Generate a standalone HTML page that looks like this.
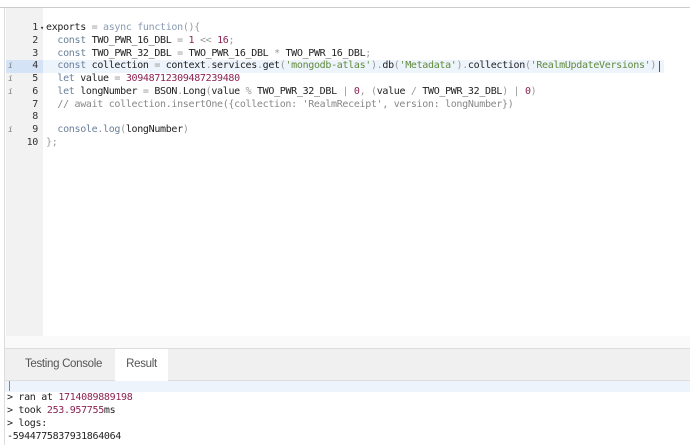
<html><head><style>
body{margin:0;width:690px;height:445px;background:#fff;font-family:"DejaVu Sans Mono","Liberation Mono",monospace;font-size:10px;letter-spacing:-0.32px;overflow:hidden;position:relative}
.top{position:absolute;left:0;top:7px;width:690px;height:1px;background:#ccc}
.gut{position:absolute;left:6px;top:8px;width:37px;height:328px;background:#f2f2f2}
.lbor{position:absolute;left:4px;top:8px;width:1px;height:437px;background:#ddd}
.hl{position:absolute;left:43px;top:60px;width:621px;height:13px;background:#eef4fc}
.hlg{position:absolute;left:6px;top:60px;width:37px;height:13px;background:#d5e3f7}
.code{position:absolute;left:0;top:22px;line-height:12.75px;color:#222}
.ln{position:absolute;left:18px;width:20px;text-align:right;color:#333}
.tx{position:absolute;left:46px;white-space:pre}
.i{position:absolute;left:8px;color:#777;font-style:italic;font-size:8px}
.k{color:#6a7f99}.n{color:#8b2252}.s{color:#5f8a3a}.c{color:#888}.p{color:#999}
.sep{position:absolute;left:5px;top:336px;width:685px;height:12px;background:#fafafa}
.tabs{position:absolute;left:5px;top:348px;width:685px;height:31px;background:#f0f0f0;border-top:1px solid #ddd;border-bottom:1px solid #ddd;font-family:"Liberation Sans",sans-serif;font-size:11.5px;color:#555}
.tab{position:absolute;top:0;height:31px;line-height:31px}
.res{left:110px;width:53px;background:#fff;text-align:center;height:32px}
.out{position:absolute;left:5px;top:381px;width:685px;height:11px;background:#eef4fc}
.cur{position:absolute;left:9px;top:381px;width:1px;height:10px;background:#888}
.o{position:absolute;left:7px;white-space:pre;color:#222;line-height:13px}
.cc{position:absolute;left:659px;top:61px;width:1px;height:11px;background:#555}
</style></head><body>
<div class="top"></div><div class="lbor"></div><div class="gut"></div>
<div class="hl"></div><div class="hlg"></div><div class="cc"></div>
<div class="code">
<div class="ln" style="top:0">1<span style="position:absolute;left:22px;font-size:7px">▾</span></div><div class="tx" style="top:0">exports <span class="p">=</span> <span class="k" style="color:#8a9bb3">async function</span><span class="p">(){</span></div>
<div class="ln" style="top:12.75px">2</div><div class="tx" style="top:12.75px">  <span class="k">const</span> TWO_PWR_16_DBL <span class="p">=</span> <span class="n">1</span> <span class="p">&lt;&lt;</span> <span class="n">16</span><span class="p">;</span></div>
<div class="ln" style="top:25.5px">3</div><div class="tx" style="top:25.5px">  <span class="k">const</span> TWO_PWR_32_DBL <span class="p">=</span> TWO_PWR_16_DBL <span class="p">*</span> TWO_PWR_16_DBL<span class="p">;</span></div>
<div class="i" style="top:38.25px">i</div><div class="ln" style="top:38.25px">4</div><div class="tx" style="top:38.25px">  <span class="k">const</span> collection <span class="p">=</span> context<span class="p">.</span>services<span class="p">.</span>get<span class="p">(</span><span class="s">'mongodb-atlas'</span><span class="p">).</span>db<span class="p">(</span><span class="s">'Metadata'</span><span class="p">).</span>collection<span class="p">(</span><span class="s">'RealmUpdateVersions'</span><span class="p">)</span></div>
<div class="i" style="top:51px">i</div><div class="ln" style="top:51px">5</div><div class="tx" style="top:51px">  <span class="k">let</span> value <span class="p">=</span> <span class="n">30948712309487239480</span></div>
<div class="i" style="top:63.75px">i</div><div class="ln" style="top:63.75px">6</div><div class="tx" style="top:63.75px">  <span class="k">let</span> longNumber <span class="p">=</span> BSON<span class="p">.</span>Long<span class="p">(</span>value <span class="p">%</span> TWO_PWR_32_DBL <span class="p">|</span> <span class="n">0</span><span class="p">,</span> <span class="p">(</span>value <span class="p">/</span> TWO_PWR_32_DBL<span class="p">)</span> <span class="p">|</span> <span class="n">0</span><span class="p">)</span></div>
<div class="ln" style="top:76.5px">7</div><div class="tx c" style="top:76.5px">  // await collection.insertOne({collection: 'RealmReceipt', version: longNumber})</div>
<div class="ln" style="top:89.25px">8</div>
<div class="i" style="top:102px">i</div><div class="ln" style="top:102px">9</div><div class="tx" style="top:102px">  <span class="k">console</span><span class="p">.</span><span class="k">log</span><span class="p">(</span>longNumber<span class="p">)</span></div>
<div class="ln" style="top:114.75px">10</div><div class="tx p" style="top:114.75px">};</div>
</div>
<div class="sep"></div>
<div class="tabs"><div class="tab" style="left:20px">Testing Console</div><div class="tab res">Result</div></div>
<div class="out"></div><div class="cur"></div>
<div class="o" style="top:391px">&gt; ran at <span class="n">1714089889198</span></div>
<div class="o" style="top:404px">&gt; took <span class="n">253.957755</span>ms</div>
<div class="o" style="top:417px">&gt; logs:</div>
<div class="o n" style="top:430px">-5944775837931864064</div>
</body></html>
